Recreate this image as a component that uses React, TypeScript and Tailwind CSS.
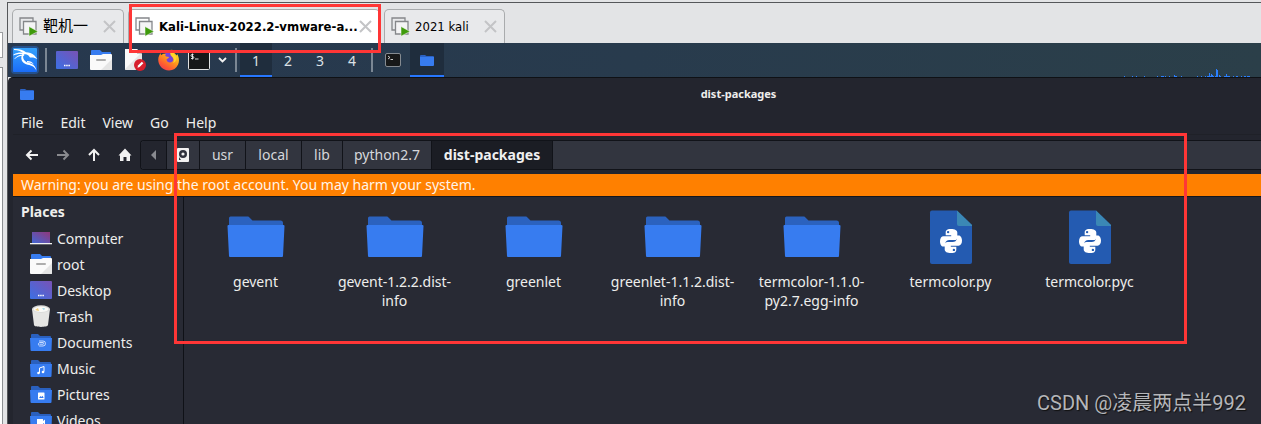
import type { ReactNode } from "react";

const uiFont = "font-['Noto_Sans',sans-serif]";

function TabIcon() {
  return (
    <svg width="20" height="20" viewBox="0 0 20 20" fill="none" aria-hidden="true">
      <path d="M4 13H1V1h13v3" stroke="#85878a" strokeWidth="1.3" />
      <path d="M4.5 4.5h12.5v12.5H4.500z" fill="#f4f4f5" stroke="#85878a" strokeWidth="1.3" />
      <path d="M10 9.500l9 5-9 4.700z" fill="#3f9a0c" stroke="#fff" strokeWidth=".5" />
    </svg>
  );
}

function VmTab({ title, active = false, cjk = false, width }: { title: string; active?: boolean; cjk?: boolean; width: string }) {
  return (
    <div
      className={`flex h-[34px] shrink-0 items-center rounded-t-[5px] border border-b-0 border-[#a9abad] pr-[7px] pl-[6px] ${width} ${active ? "bg-white" : "bg-[#e8e9eb]"}`}
    >
      <button className={`flex min-w-0 flex-1 items-center gap-1 text-left whitespace-nowrap text-black ${active ? "font-bold" : ""} ${cjk ? "text-[15px]" : "text-[13px]"}`}>
        <span className="shrink-0"><TabIcon /></span>
        <span>{title}</span>
      </button>
      <button aria-label={`Close ${title}`} className="shrink-0">
        <svg width="13" height="13" viewBox="0 0 13 13" aria-hidden="true">
          <path d="M1 1l11 11M12 1L1 12" stroke="#c3c4c6" strokeWidth="2" />
        </svg>
      </button>
    </div>
  );
}

function KaliLogo() {
  return (
    <svg width="28" height="28" viewBox="0 0 28 28" aria-hidden="true">
      <defs>
        <linearGradient id="kali" x1="0" y1="0" x2="0" y2="1">
          <stop offset="0" stopColor="#35a2fb" />
          <stop offset="1" stopColor="#1a6cf8" />
        </linearGradient>
      </defs>
      <rect width="28" height="28" rx="4" fill="#2367c8" opacity=".5" />
      <rect x="2" y="2" width="24" height="24" rx="1" fill="url(#kali)" />
      <g fill="#fff">
        <path d="M3 3c5-.2 9 1 12 3.200 3 .2 6 .8 8.500 3.200l3 3.800c-2.500-1.600-5-2-7.500-1.600l-1.500-2.200c-1-.8-2.300-1.200-4-1.200C10.500 5.500 7 4 3 4z" />
        <path d="M2.500 8.500c4-2 7.500-2.500 11.500-1.300l-1 1.200c-4-.9-7-.4-10.500 1zM3.500 12.500c3-3 6-4.300 10-3.800l-.7 1.200c-3.300-.2-6 .7-9.300 3.400z" />
        <path d="M13 7c-2 4.500-.5 8.500 4.500 9.800 4.500 1 7 3.200 7.900 7.700-1.800-3.500-4.200-4.900-8.700-5.700C10.500 17.500 8.500 12 12 7z" />
        <path d="M16 15c3-.1 5.500 1 7 3.500-2-1.500-4-2.200-7-2z" />
      </g>
    </svg>
  );
}

function DesktopIcon() {
  return (
    <svg width="22" height="18" viewBox="0 0 22 18" aria-hidden="true">
      <defs>
        <linearGradient id="desk" x1="0" y1="1" x2="1" y2="0">
          <stop offset="0" stopColor="#3b70e5" />
          <stop offset="1" stopColor="#7952b5" />
        </linearGradient>
      </defs>
      <rect width="22" height="18" rx="1" fill="url(#desk)" />
      <path d="M8 14.500h6" stroke="#fff" strokeWidth="1.500" strokeDasharray="1.500 .7" />
    </svg>
  );
}

function HomeFolderIcon() {
  return (
    <svg width="22" height="20" viewBox="0 0 22 20" aria-hidden="true">
      <path d="M1 1a1 1 0 011-1h8l2 2h8a1 1 0 011 1v5H1z" fill="#377cf0" />
      <path d="M0 5h11l2-1h8a1 1 0 011 1v14a1 1 0 01-1 1H1a1 1 0 01-1-1z" fill="#fafafa" />
      <path d="M22 9v10a1 1 0 01-1 1H11z" fill="#e5e5e5" />
      <rect x="6" y="9" width="10" height="2" rx="1" fill="#adadad" />
    </svg>
  );
}

function EditorIcon() {
  return (
    <svg width="22" height="22" viewBox="0 0 22 22" aria-hidden="true">
      <path d="M1 0h12l5 5v15a1 1 0 01-1 1H2a1 1 0 01-1-1z" fill="#fafafa" />
      <path d="M13 0v5h5z" fill="#c6c6c6" />
      <path d="M1 20L16 5h2v16H2z" fill="#e7e7e7" />
      <circle cx="16" cy="16" r="6" fill="#d71f2c" />
      <path d="M13.500 18.700l.5-2.200 3.800-3.800 1.600 1.600-3.800 3.800z" fill="#fff" />
    </svg>
  );
}

function FirefoxIcon() {
  return (
    <svg width="22" height="22" viewBox="0 0 22 22" aria-hidden="true">
      <defs>
        <linearGradient id="fox" x1=".8" y1=".1" x2=".2" y2="1">
          <stop offset="0" stopColor="#ffe226" />
          <stop offset=".4" stopColor="#ff9a1c" />
          <stop offset=".75" stopColor="#ff5a33" />
          <stop offset="1" stopColor="#f03a50" />
        </linearGradient>
      </defs>
      <circle cx="11" cy="11.500" r="8" fill="#7542d8" />
      <path d="M2.500 4c.1 1 .3 1.700.7 2.200C5 4.500 7 4.500 8 5c-1 .8-1 1.900.2 2.500l2.800.5c-.3 1.500-2 1.700-2.500 2.500.2 3 4 4 6 2 1.800-2 .4-4.500-1.500-5.500-1.500-3 .2-6 1-6.500 1 3 3.500 4 4.600 6 .3-.2.500-.8.500-1.500 2 3 2.500 7 1 10.500A10.300 10.300 0 0111 21.500C3 21.500-2 13 1.200 6.500z" fill="url(#fox)" />
      <path d="M13 .5c-1 2-1 4.500.8 6.500 2.500 2 3 5 1.200 7 3-1 4-4 2.800-6.500C16.500 5 13.500 4 13 .5z" fill="#ffd42c" />
    </svg>
  );
}

function TerminalIcon() {
  return (
    <svg width="22" height="20" viewBox="0 0 22 20" aria-hidden="true">
      <rect x=".5" y=".5" width="21" height="19" rx="1" fill="#171819" stroke="#e1e2e2" />
      <path d="M5.500 4.500H4a1 1 0 000 2h.8a1 1 0 010 2H3M4.500 3.500v6M7 9h3.500" fill="none" stroke="#f2f2f2" strokeWidth=".9" />
    </svg>
  );
}

function SmallTerminalIcon() {
  return (
    <svg width="16" height="14" viewBox="0 0 16 14" aria-hidden="true">
      <rect x=".5" y=".5" width="15" height="13" rx="1.500" fill="#171819" stroke="#858b91" />
      <path d="M3 3l2 1.500L3 6M5.500 6.500H8" fill="none" stroke="#ddd" strokeWidth=".9" />
    </svg>
  );
}

function SmallFolderIcon() {
  return (
    <svg width="14" height="11" viewBox="0 0 14 11" aria-hidden="true">
      <path d="M0 1a1 1 0 011-1h4l1.500 1H13a1 1 0 011 1v2H0z" fill="#2b62c4" />
      <path d="M0 2h14v8a1 1 0 01-1 1H1a1 1 0 01-1-1z" fill="#377cf0" />
    </svg>
  );
}

function PlaceFolder({ children }: { children: ReactNode }) {
  return (
    <svg width="22" height="17" viewBox="0 0 22 17" aria-hidden="true">
      <path d="M1 1a1 1 0 011-1h6l2 2h10a1 1 0 011 1v4H1z" fill="#2a60be" />
      <path d="M0 4h22l-.5 12a1 1 0 01-1 1h-19a1 1 0 01-1-1z" fill="#377cf0" />
      {children}
    </svg>
  );
}

function ComputerIcon() {
  return (
    <svg width="22" height="13" viewBox="0 0 22 13" aria-hidden="true">
      <defs>
        <linearGradient id="computer" x1="0" y1="1" x2="1" y2="0">
          <stop offset="0" stopColor="#4267d6" />
          <stop offset="1" stopColor="#903779" />
        </linearGradient>
      </defs>
      <rect x="2" width="18" height="11" fill="url(#computer)" />
      <rect y="11" width="22" height="1.300" fill="#f2f2f2" />
    </svg>
  );
}

function TrashIcon() {
  return (
    <svg width="20" height="22" viewBox="0 0 20 22" aria-hidden="true">
      <path d="M1 4l2 16c.2 2.500 13.800 2.500 14 0l2-16z" fill="#e5e5e3" />
      <ellipse cx="10" cy="4" rx="9" ry="3.700" fill="#d7d8d6" />
      <ellipse cx="10" cy="4.300" rx="7.500" ry="2.700" fill="#fafaf7" />
      <path d="M4 5l3-2 1 3z" fill="#f3cf78" />
      <path d="M11 3l3 .3-1 2z" fill="#9cd5e6" />
    </svg>
  );
}

function FolderIcon() {
  return (
    <svg width="64" height="64" viewBox="0 0 64 64" aria-hidden="true">
      <path d="M5 12a1.500 1.500 0 011.500-1.500h17c1 0 1.500.5 2 1l3 3h28a2.500 2.500 0 012.500 2.500v6H5z" fill="#2b62bf" />
      <path d="M4.500 19h55a1 1 0 011 1L59 50a1 1 0 01-1 1H6a1 1 0 01-1-1L3.500 20a1 1 0 011-1z" fill="#377cf0" />
    </svg>
  );
}

function PythonFileIcon() {
  return (
    <svg width="64" height="64" viewBox="0 0 64 64" aria-hidden="true">
      <path d="M13 4.500h25L53 19v37a2 2 0 01-2 2H13a2 2 0 01-2-2V6.500a2 2 0 012-2z" fill="#245bb1" />
      <path d="M38 4.500L53 19v1H40a2 2 0 01-2-2z" fill="#3b88b5" />
      <g fill="#fff">
        <path d="M31.900 23c-4.700 0-5.200 2-5.200 3.600v2.700h5.500v1H24.500c-2 0-3.500 2-3.500 4.900s1.300 5.400 3.300 5.400h2v-3c0-2.200 1.900-3.600 4-3.600H35.500a2.800 2.800 0 002.800-2.800v-4.600c0-2.200-2.400-3.600-6.400-3.600zm-2.800 1.900a1.200 1.200 0 110 2.400 1.200 1.200 0 010-2.400z" />
        <path d="M32.100 47c4.700 0 5.200-2 5.200-3.600v-2.700h-5.500v-1h7.700c2 0 3.500-2 3.500-4.900s-1.300-5.400-3.300-5.400h-2v3c0 2.200-1.900 3.600-4 3.600h-5.200a2.800 2.800 0 00-2.800 2.800v4.600c0 2.200 2.400 3.600 6.400 3.600zm2.800-1.900a1.200 1.200 0 110-2.400 1.200 1.200 0 010 2.400z" />
      </g>
    </svg>
  );
}

function PanelButton({ label, width = "w-[34px]", active = false, children }: { label: string; width?: string; active?: boolean; children: ReactNode }) {
  return (
    <button aria-label={label} className={`flex h-full shrink-0 items-center justify-center border-y-2 border-t-transparent ${width} ${active ? "border-b-[#2777ff] bg-[#1f2d3d]" : "border-b-transparent"}`}>
      {children}
    </button>
  );
}

function Separator() {
  return (
    <span className="flex w-2 shrink-0 justify-center">
      <span className="h-6 w-[2px] bg-[#7b8794]" />
    </span>
  );
}

const load = [
  [0, 1], [8, 1], [12, 1], [20, 1], [33, 1], [37, 1], [38, 1], [39, 1], [41, 1], [45, 1], [50, 2], [51, 1], [52, 1], [57, 1],
  [73, 1], [77, 1], [81, 1], [83, 1], [84, 1], [85, 4], [86, 1], [87, 3], [88, 2], [89, 1], [91, 1], [92, 8], [93, 7], [95, 2], [96, 1],
  [100, 1], [101, 1], [102, 3], [103, 1], [104, 1], [105, 1], [109, 1], [112, 1], [113, 1], [117, 1], [120, 1], [121, 1], [123, 1], [124, 1], [125, 1],
];

function CpuGraph() {
  return (
    <svg width="127" height="10" viewBox="0 0 127 10" className="shrink-0" shapeRendering="crispEdges" aria-hidden="true">
      {load.map(([x, h]) => (
        <rect key={x} x={x} y={10 - h} width="1" height={h} fill="#2b7fff" />
      ))}
    </svg>
  );
}

function Panel() {
  return (
    <div className="flex h-[34px] shrink-0 items-center bg-linear-to-r from-[#27384e] via-[#283b4d] to-[#2b3f49] text-[14px] text-[#dce1e6]">
      <PanelButton label="Applications"><KaliLogo /></PanelButton>
      <Separator />
      <PanelButton label="Show desktop"><DesktopIcon /></PanelButton>
      <PanelButton label="Home folder"><HomeFolderIcon /></PanelButton>
      <PanelButton label="Text editor"><EditorIcon /></PanelButton>
      <PanelButton label="Firefox"><FirefoxIcon /></PanelButton>
      <PanelButton label="Terminal" width="w-[26px]"><TerminalIcon /></PanelButton>
      <PanelButton label="More terminals" width="w-5">
        <svg width="9" height="6" viewBox="0 0 9 6" aria-hidden="true">
          <path d="M1 1l3.500 3.500L8 1" fill="none" stroke="#f2f2f2" strokeWidth="1.800" />
        </svg>
      </PanelButton>
      <Separator />
      {[1, 2, 3, 4].map((n) => (
        <PanelButton key={n} label={`Workspace ${n}`} width="w-8" active={n === 1}>{n}</PanelButton>
      ))}
      <Separator />
      <PanelButton label="Terminal window"><SmallTerminalIcon /></PanelButton>
      <PanelButton label="File manager window" active><SmallFolderIcon /></PanelButton>
      <div className="flex h-full flex-1 items-end justify-end pr-[10px]"><CpuGraph /></div>
    </div>
  );
}

function NavButton({ label, muted = false, children }: { label: string; muted?: boolean; children: ReactNode }) {
  return (
    <button aria-label={label} className={`flex h-[30px] w-[31px] items-center justify-center ${muted ? "text-[#8a8b8f]" : "text-[#f2f2f2]"}`}>
      <svg width="14" height="14" viewBox="0 0 14 14" fill="none" stroke="currentColor" strokeWidth="2" aria-hidden="true">{children}</svg>
    </button>
  );
}

const crumbs = [
  { name: "usr", width: "w-[46px]" },
  { name: "local", width: "w-[56px]" },
  { name: "lib", width: "w-[41px]" },
  { name: "python2.7", width: "w-[89px]" },
];

function Toolbar() {
  return (
    <div className="flex h-[39px] shrink-0 items-center pl-[3px]">
      <NavButton label="Back"><path d="M13 7H2M6.500 2.500L2 7l4.500 4.500" /></NavButton>
      <NavButton label="Forward" muted><path d="M1 7h11M7.500 2.500L12 7l-4.500 4.500" /></NavButton>
      <NavButton label="Up"><path d="M7 13V2M2 7l5-5 5 5" /></NavButton>
      <NavButton label="Home"><path d="M7 .5L.5 7.500H2V13h3.500V9h3v4H12V7.500h1.500z" fill="currentColor" stroke="none" /></NavButton>
      <nav aria-label="Path" className="flex h-[30px] min-w-0 flex-1 items-stretch rounded-l-[4px] border border-r-0 border-[#111319] bg-[#32353f] text-[14px] text-[#d5d7db]">
        <button aria-label="Scroll path left" className="flex w-[25px] items-center justify-center rounded-l-[4px] bg-[#23252e]">
          <svg width="5" height="10" viewBox="0 0 5 10" aria-hidden="true"><path d="M5 0v10L0 5z" fill="#888a90" /></svg>
        </button>
        <button aria-label="File system" className="flex w-[33px] items-center justify-center border-l border-[#111319]">
          <svg width="12" height="14" viewBox="0 0 12 14" aria-hidden="true">
            <rect width="12" height="14" rx="1" fill="#f2f2f2" />
            <circle cx="6" cy="6" r="4" fill="#2f323d" />
            <circle cx="6" cy="6" r="1.600" fill="#f2f2f2" />
            <path d="M2 9v3h2z" fill="#2f323d" />
          </svg>
        </button>
        {crumbs.map((c) => (
          <button key={c.name} className={`shrink-0 border-l border-[#111319] ${c.width}`}>{c.name}</button>
        ))}
        <button aria-current="page" className="w-[122px] shrink-0 border-x border-[#111319] bg-[#1b1d24] font-bold text-[#f0f0f0]">dist-packages</button>
      </nav>
    </div>
  );
}

const places: { name: string; icon: ReactNode }[] = [
  { name: "Computer", icon: <ComputerIcon /> },
  { name: "root", icon: <HomeFolderIcon /> },
  { name: "Desktop", icon: <DesktopIcon /> },
  { name: "Trash", icon: <TrashIcon /> },
  {
    name: "Documents",
    icon: <PlaceFolder><path d="M9 7h4a2.500 2.500 0 010 5H9.500a2 2 0 010-3.500H13c1 0 1 1.700 0 1.700H9.500" fill="none" stroke="#d7e5ff" strokeWidth=".9" /></PlaceFolder>,
  },
  {
    name: "Music",
    icon: <PlaceFolder><path d="M9.500 13V8l4.500-1.500v5" fill="none" stroke="#fff" /><circle cx="8.500" cy="13" r="1.300" fill="#fff" /><circle cx="13" cy="12" r="1.300" fill="#fff" /></PlaceFolder>,
  },
  {
    name: "Pictures",
    icon: <PlaceFolder><rect x="8" y="6.500" width="6.500" height="7" rx=".5" fill="#fff" /><path d="M9 12l1.500-2 1 1 1-1.200 1.200 2.200z" fill="#377cf0" /></PlaceFolder>,
  },
  {
    name: "Videos",
    icon: <PlaceFolder><path d="M7 7h6v2l2-1.500v5L13 11v2H7z" fill="#fff" /></PlaceFolder>,
  },
];

const files = [
  { name: "gevent", python: false },
  { name: "gevent-1.2.2.dist-info", python: false },
  { name: "greenlet", python: false },
  { name: "greenlet-1.1.2.dist-info", python: false },
  { name: "termcolor-1.1.0-py2.7.egg-info", python: false },
  { name: "termcolor.py", python: true },
  { name: "termcolor.pyc", python: true },
];

function FileManager() {
  return (
    <main className="flex min-h-0 flex-1 flex-col rounded-tl-[5px] border-t border-[#0f1115] bg-[#23252e] pl-[5px] text-[14px] text-[#eeeeec]">
      <header className="flex h-8 shrink-0 items-center pl-[7px]">
        <SmallFolderIcon />
        <h1 className="flex-1 pl-[182px] text-center text-[11px] font-bold">dist-packages</h1>
      </header>
      <div role="menubar" className="flex h-[25px] shrink-0 items-center gap-[17px] border-b border-[#1f2128] pl-2">
        {["File", "Edit", "View", "Go", "Help"].map((m) => (
          <button key={m} role="menuitem">{m}</button>
        ))}
      </div>
      <Toolbar />
      <p role="alert" className="h-[22px] shrink-0 truncate bg-[#ff8000] pl-2 leading-[22px] text-[#fff4e8]">
        Warning: you are using the root account. You may harm your system.
      </p>
      <div className="flex min-h-0 flex-1 overflow-hidden border-t border-[#15171c] bg-[#282a34]">
        <aside className="w-[171px] shrink-0 border-r border-[#0f1117] pt-[2px]">
          <h2 className="pl-2 leading-[26px] font-bold">Places</h2>
          <ul>
            {places.map((p) => (
              <li key={p.name}>
                <a href="#" className="flex h-[26px] items-center gap-[5px] pl-[17px]">
                  <span className="flex w-[22px] justify-center">{p.icon}</span>
                  {p.name}
                </a>
              </li>
            ))}
          </ul>
        </aside>
        <ul className="grid flex-1 grid-cols-[repeat(auto-fill,139px)] content-start pt-[9px] pl-[2px]">
          {files.map((f) => (
            <li key={f.name}>
              <button className="flex w-full flex-col items-center gap-[2px] leading-[19px]">
                {f.python ? <PythonFileIcon /> : <FolderIcon />}
                <span className="w-full px-1">{f.name}</span>
              </button>
            </li>
          ))}
        </ul>
      </div>
    </main>
  );
}

export default function App() {
  return (
    <div className={`relative flex h-screen overflow-hidden bg-[#e3e4e6] ${uiFont}`}>
      <div className="flex w-[7px] shrink-0 flex-col gap-[9px] pt-8 pr-1">
        <div className="h-[26px] border border-l-0 border-[#9b9da0] bg-white" />
        <div className="flex-1 border border-b-0 border-l-0 border-[#8d9093] bg-white" />
      </div>
      <div className="mt-[2px] flex min-w-0 flex-1 flex-col border-t border-l border-[#55575a]">
        <div className="flex h-10 shrink-0 items-end gap-1 pl-1 font-['DejaVu_Sans_Condensed','DejaVu_Sans','Noto_Sans_CJK_SC',sans-serif]">
          <VmTab title="靶机一" cjk width="w-[112px]" />
          <VmTab title="Kali-Linux-2022.2-vmware-a..." active width="w-[252px]" />
          <VmTab title="2021 kali" width="w-[121px]" />
        </div>
        <Panel />
        <FileManager />
      </div>
      <div className="pointer-events-none absolute top-1 left-[129px] h-[49px] w-[252px] border-3 border-[#ff3636]" />
      <div className="pointer-events-none absolute top-[133px] left-[174px] h-[211px] w-[1013px] border-3 border-[#ff3636]" />
      <p className="pointer-events-none absolute right-[15px] bottom-[7px] font-['Roboto','Noto_Sans_CJK_SC',sans-serif] text-[20px] leading-7 text-[#b5b6ba] [text-shadow:1px_1px_1px_#111]">
        CSDN @凌晨两点半992
      </p>
    </div>
  );
}
